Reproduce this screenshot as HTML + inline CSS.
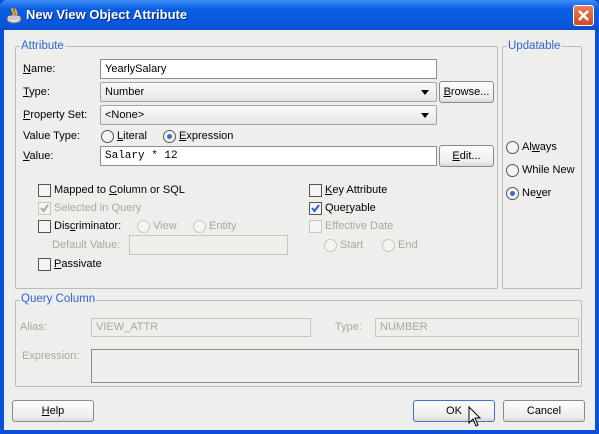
<!DOCTYPE html>
<html><head><style>
*{box-sizing:border-box}
body{margin:0;width:599px;height:434px;overflow:hidden;font-family:"Liberation Sans",Tahoma,sans-serif;font-size:11px;color:#000}
.win{position:absolute;left:0;top:0;width:599px;height:434px;background:#0a4fd8;}
.title{position:absolute;left:0;top:0;width:599px;height:30px;background:linear-gradient(#3d8ef8,#0b5de0 30%,#0857dc 80%,#0a4ccd);border-radius:7px 7px 0 0}
.title span{position:absolute;left:26px;top:7px;color:#fff;font-weight:bold;font-size:13px;text-shadow:1px 1px #0a2a80}
.close{position:absolute;left:573px;top:5px;width:21px;height:21px;border:1px solid #fff;border-radius:3px;background:linear-gradient(#e8805a,#d04a20)}
.body{position:absolute;left:4px;top:30px;width:591px;height:400px;background:#eeeeec}
.a{position:absolute;white-space:nowrap}
.grp{position:absolute;border:1px solid #bcbcb8;border-radius:2px}
.lg{position:absolute;background:#eeeeec;color:#2f64d4;padding:0 1px;font-size:11.5px}
.inp{position:absolute;background:#fff;border:1px solid #8e8e8e;height:20px;padding:3px 4px}
.dis{background:#eeeeec;border-color:#c9c7ba;color:#aca899}
.combo{position:absolute;border:1px solid #a3a3a3;border-radius:2px;background:linear-gradient(#fafafa,#e6e6e6);height:20px;padding:3px 4px}
.combo:after{content:"";position:absolute;right:7px;top:7px;border:4px solid transparent;border-top:5px solid #000}
.btn{position:absolute;border:1px solid #8a8a8a;border-radius:3px;background:linear-gradient(#fdfdfd,#ececec 80%,#d8d8d8);text-align:center;height:22px;padding-top:4px}
.cb{position:absolute;width:13px;height:13px;border:1px solid #555;background:#f4f4f2}
.cb.d{border-color:#c9c7ba}
.rd{position:absolute;width:13px;height:13px;border:1px solid #555;border-radius:50%;background:#f4f4f2}
.rd.d{border-color:#c9c7ba}
.rd.on:after{content:"";position:absolute;left:3px;top:3px;width:5px;height:5px;border-radius:50%;background:#3c6ad0}
.g{color:#aca899}
u{text-decoration:underline}
</style></head><body>
<div class="win">
<div class="title"><svg style="position:absolute;left:5px;top:6px" width="18" height="18"><ellipse cx="9" cy="13" rx="7" ry="4" fill="#ddd" stroke="#777"/><rect x="3" y="10" width="12" height="4" fill="#ccc"/><path d="M8 2c-3 3 3 4 0 8M11 3c-2 2 2 3 0 6" stroke="#f7b21a" stroke-width="2" fill="none"/></svg><span>New View Object Attribute</span></div>
<div class="close"><svg width="19" height="19"><path d="M5 5L14 14M14 5L5 14" stroke="#fff" stroke-width="2.5"/></svg></div>
<div class="body"></div>
</div>
<div class="grp" style="left:15px;top:46px;width:483px;height:243px"></div>
<div class="lg" style="left:20px;top:40px">Attribute</div>
<div class="grp" style="left:502px;top:46px;width:80px;height:243px"></div>
<div class="lg" style="left:507px;top:40px">Updatable</div>

<div class="a" style="left:23px;top:63px"><u>N</u>ame:</div>
<div class="inp" style="left:100px;top:59px;width:337px">YearlySalary</div>
<div class="a" style="left:23px;top:86px"><u>T</u>ype:</div>
<div class="combo" style="left:100px;top:82px;width:337px">Number</div>
<div class="btn" style="left:439px;top:81px;width:55px"><u>B</u>rowse...</div>
<div class="a" style="left:23px;top:109px"><u>P</u>roperty Set:</div>
<div class="combo" style="left:100px;top:105px;width:337px">&lt;None&gt;</div>
<div class="a" style="left:23px;top:130px">Value Type:</div>
<div class="rd" style="left:101px;top:130px"></div><div class="a" style="left:117px;top:130px"><u>L</u>iteral</div>
<div class="rd on" style="left:163px;top:130px"></div><div class="a" style="left:179px;top:130px"><u>E</u>xpression</div>
<div class="a" style="left:23px;top:150px"><u>V</u>alue:</div>
<div class="inp" style="left:100px;top:146px;width:337px;font-family:'Liberation Mono',monospace;font-size:11px">Salary * 12</div>
<div class="btn" style="left:439px;top:145px;width:55px"><u>E</u>dit...</div>

<div class="cb" style="left:38px;top:184px"></div><div class="a" style="left:54px;top:184px">Mapped to <u>C</u>olumn or SQL</div>
<div class="cb d" style="left:38px;top:202px"><svg width="11" height="11" style="position:absolute"><path d="M2 5l2.5 3L9 2" stroke="#aca899" stroke-width="2" fill="none"/></svg></div><div class="a g" style="left:54px;top:202px">Selected in Query</div>
<div class="cb" style="left:38px;top:220px"></div><div class="a" style="left:54px;top:220px">Dis<u>c</u>riminator:</div>
<div class="rd d" style="left:137px;top:220px"></div><div class="a g" style="left:153px;top:220px">View</div>
<div class="rd d" style="left:193px;top:220px"></div><div class="a g" style="left:209px;top:220px">Entity</div>
<div class="a g" style="left:52px;top:239px">Default Value:</div>
<div class="inp dis" style="left:129px;top:235px;width:159px"></div>
<div class="cb" style="left:38px;top:258px"></div><div class="a" style="left:54px;top:258px"><u>P</u>assivate</div>

<div class="cb" style="left:309px;top:184px"></div><div class="a" style="left:325px;top:184px"><u>K</u>ey Attribute</div>
<div class="cb" style="left:309px;top:202px"><svg width="11" height="11" style="position:absolute"><path d="M2 5l2.5 3L9 2" stroke="#2b5fd0" stroke-width="2" fill="none"/></svg></div><div class="a" style="left:325px;top:202px">Que<u>r</u>yable</div>
<div class="cb d" style="left:309px;top:220px"></div><div class="a g" style="left:325px;top:220px">Effective Date</div>
<div class="rd d" style="left:324px;top:239px"></div><div class="a g" style="left:340px;top:239px">Start</div>
<div class="rd d" style="left:382px;top:239px"></div><div class="a g" style="left:398px;top:239px">End</div>

<div class="rd" style="left:506px;top:141px"></div><div class="a" style="left:522px;top:141px">Al<u>w</u>ays</div>
<div class="rd" style="left:506px;top:164px"></div><div class="a" style="left:522px;top:164px">While New</div>
<div class="rd on" style="left:506px;top:187px"></div><div class="a" style="left:522px;top:187px">Ne<u>v</u>er</div>

<div class="grp" style="left:15px;top:300px;width:567px;height:87px"></div>
<div class="lg" style="left:20px;top:293px">Query Column</div>
<div class="a g" style="left:20px;top:321px">Alias:</div>
<div class="inp dis" style="left:91px;top:318px;width:220px;height:19px;padding-top:2px">VIEW_ATTR</div>
<div class="a g" style="left:335px;top:321px">Type:</div>
<div class="inp dis" style="left:375px;top:318px;width:204px;height:19px;padding-top:2px">NUMBER</div>
<div class="a g" style="left:22px;top:350px">Expression:</div>
<div class="inp dis" style="left:91px;top:349px;width:488px;height:34px;border-color:#8c8c8c"></div>

<div class="btn" style="left:12px;top:400px;width:82px"><u>H</u>elp</div>
<div class="btn" style="left:413px;top:400px;width:82px;border-color:#4a6ec8">OK</div>
<div class="btn" style="left:503px;top:400px;width:82px">Cancel</div>
<svg style="position:absolute;left:468px;top:406px" width="14" height="24"><path d="M1 1L1 17L5 13L8 20L10 19L7 12L12 12Z" fill="#fff" stroke="#000"/></svg>
</body></html>
